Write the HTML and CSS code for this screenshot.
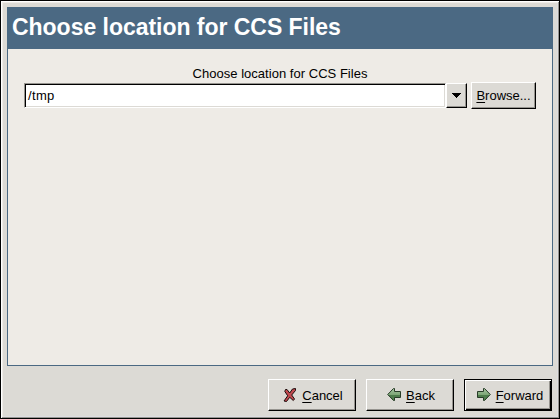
FILE: index.html
```html
<!DOCTYPE html>
<html lang="en">
<head>
<meta charset="utf-8">
<title>Choose location for CCS Files</title>
<link rel="stylesheet" href="styles.css">
</head>
<body>
<main class="window">
  <section class="panel">
    <h1 class="title"><span class="title-text">Choose location for CCS Files</span></h1>
    <div class="content">
      <div class="caption">Choose location for CCS Files</div>
      <div class="row">
        <div class="entry"><span class="entry-text">/tmp</span></div>
        <button class="button drop" aria-label="Show choices"><svg width="9" height="5" viewBox="0 0 9 5" shape-rendering="crispEdges"><path d="M0 0h9v1h-1v1h-1v1h-1v1h-1v1h-1v-1h-1v-1h-1v-1h-1v-1h-1z"/></svg></button>
        <button class="button browse"><span class="browse-text"><u>B</u>rowse...</span></button>
      </div>
    </div>
  </section>
  <footer class="actions">
    <button class="button action">
      <svg class="icon" width="16" height="16" viewBox="0 0 16 16"><path d="M3.5 2.5L5 2.5 7.7 6 10.5 2 13.5 1.5 13.5 3.5 9.7 8 12.5 12 11.3 13.5 7.7 10.3 4.5 14.5 2 14 5.7 8.8 2.8 4.4z" fill="#c24a50" stroke="#1c0c0c"/></svg>
      <span class="action-text"><u>C</u>ancel</span>
    </button>
    <button class="button action">
      <svg class="icon" width="16" height="16" viewBox="0 0 16 16"><use href="#arrow" transform="matrix(-1 0 0 1 16 0)"/></svg>
      <span class="action-text"><u>B</u>ack</span>
    </button>
    <button class="button action default">
      <svg class="icon" width="16" height="16" viewBox="0 0 16 16"><defs><linearGradient id="green" x2="0" y2="1"><stop offset="0" stop-color="#a5c4a0"/><stop offset=".5" stop-color="#7fa778"/><stop offset=".55" stop-color="#4d7b4b"/><stop offset="1" stop-color="#52804e"/></linearGradient></defs><path id="arrow" d="M1.5 4.5h6v-3h1L14.3 7.5 8.5 13.5h-1v-3h-6z" fill="url(#green)" stroke="#273b27"/></svg>
      <span class="action-text"><u>F</u>orward</span>
    </button>
  </footer>
</main>
</body>
</html>
```
FILE: styles.css
```css
* { box-sizing: border-box; }
body {
  margin: 0;
  font: 13px/16px "Liberation Sans", Arial, sans-serif;
  color: #000;
}
.window {
  width: 560px;
  height: 419px;
  padding: 6px;
  border: 1px solid #000;
  background: #dcdad5;
  box-shadow: inset 1px 1px #fff, inset -1px -1px #96948f, inset 2px 2px #eeebe7, inset -2px -2px #dddde0;
}
.panel {
  width: 546px;
  height: 359px;
  border: 1px solid #4b6983;
  background: #eeebe6;
}
.title {
  height: 41px;
  margin: 0;
  padding: 5px 4px;
  background: #4b6983;
  color: #fff;
  font-size: 23px;
  line-height: 28px;
  white-space: nowrap;
}
.title-text { letter-spacing: -.03px; }
.content { padding: 17px 16px 0; }
.caption { height: 16px; text-align: center; letter-spacing: .03px; }
.row { display: flex; align-items: center; }
.entry {
  width: 422px;
  height: 25px;
  padding: 4px 3px;
  border: 1px solid;
  border-color: #96948f #fff #fff #96948f;
  background: #fff;
  box-shadow: inset 1px 1px #000, inset -1px -1px #dcdad5;
}
.entry-text { letter-spacing: .35px; }
.button {
  display: flex;
  align-items: center;
  justify-content: center;
  padding: 0;
  border: 1px solid;
  border-color: #fff #000 #000 #fff;
  border-radius: 0;
  background: #dcdad5;
  box-shadow: inset -1px -1px #96948f;
  color: #000;
  font: inherit;
  white-space: nowrap;
}
u { text-decoration: underline; text-underline-offset: 2px; text-decoration-thickness: 1px; text-decoration-skip-ink: none; }
.drop { width: 21px; height: 25px; }
.browse { width: 65px; height: 27px; margin-left: 4px; }
.actions { display: flex; justify-content: flex-end; gap: 10px; padding: 13px 1px 0 0; }
.action { width: 88px; height: 32px; gap: 4px; padding-left: 1px; }
.action-text { padding-top: 2px; }
.default {
  padding-left: 3px;
  border-color: #000;
  box-shadow: inset 1px 1px #fff, inset -1px -1px #000, inset -2px -2px #96948f;
}
.icon { flex: none; }
```
